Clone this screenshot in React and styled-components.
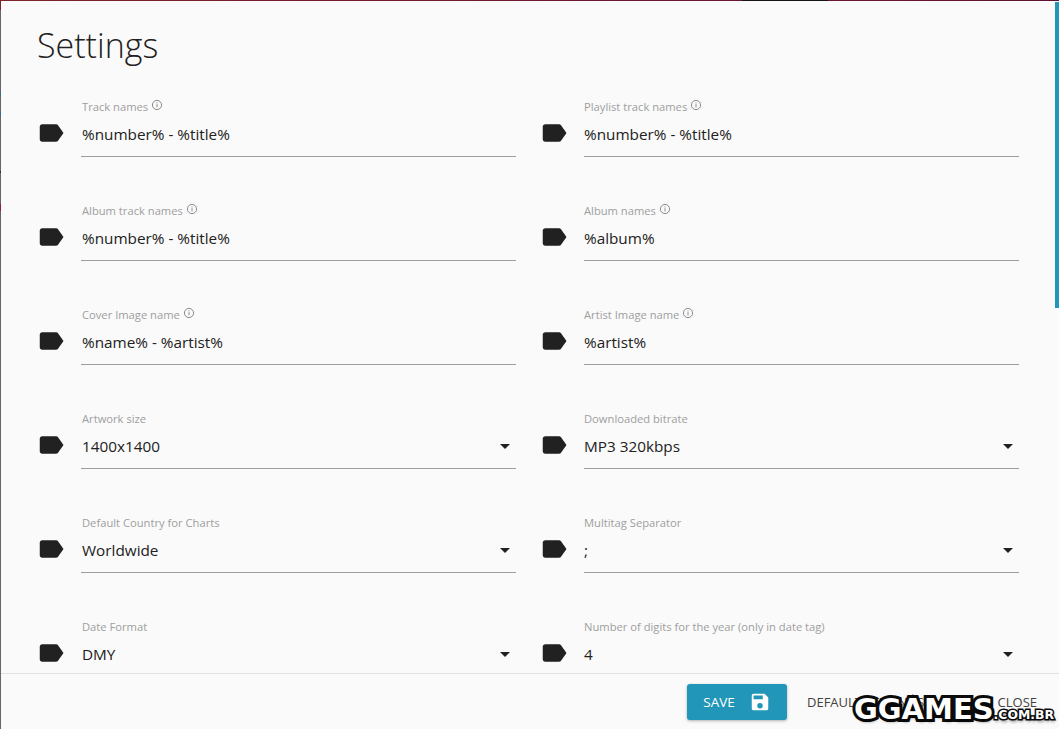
import React from 'react';
import styled, { createGlobalStyle } from 'styled-components';

const LEFT_FIELDS = [
  { label: 'Track names', value: '%number% - %title%', info: true },
  { label: 'Album track names', value: '%number% - %title%', info: true },
  { label: 'Cover Image name', value: '%name% - %artist%', info: true },
  { label: 'Artwork size', value: '1400x1400', select: true },
  { label: 'Default Country for Charts', value: 'Worldwide', select: true },
  { label: 'Date Format', value: 'DMY', select: true },
];

const RIGHT_FIELDS = [
  { label: 'Playlist track names', value: '%number% - %title%', info: true },
  { label: 'Album names', value: '%album%', info: true },
  { label: 'Artist Image name', value: '%artist%', info: true },
  { label: 'Downloaded bitrate', value: 'MP3 320kbps', select: true },
  { label: 'Multitag Separator', value: ';', select: true },
  { label: 'Number of digits for the year (only in date tag)', value: '4', select: true },
];

function LabelIcon() {
  return (
    <TagIcon viewBox="0 0 24 24">
      <path d="M17.63 5.84C17.27 5.33 16.67 5 16 5L5 5.01C3.9 5.01 3 5.9 3 7v10c0 1.1.9 1.99 2 1.99L16 19c.67 0 1.27-.33 1.63-.84L22 12l-4.37-6.16z" />
    </TagIcon>
  );
}

function InfoIcon() {
  return (
    <InfoGlyph viewBox="0 0 12 12">
      <circle cx="6" cy="6" r="4.6" fill="none" stroke="#8a8a8a" strokeWidth="1" />
      <path d="M6 5.2v3.2M6 3.4v1" stroke="#8a8a8a" strokeWidth="1" fill="none" />
    </InfoGlyph>
  );
}

function Field({ label, value, info, select, inset }) {
  return (
    <FieldRow>
      <LabelIcon />
      <FieldBody>
        <FieldLabel $inset={inset}>
          {label}
          {info && <InfoIcon />}
        </FieldLabel>
        <FieldValue $inset={inset}>
          <span>{value}</span>
          {select && <Caret />}
        </FieldValue>
      </FieldBody>
    </FieldRow>
  );
}

export default function App() {
  return (
    <>
      <GlobalStyle />
      <Page>
        <Dialog>
          <Content>
            <Title>Settings</Title>
            <Columns>
              <Column>
                {LEFT_FIELDS.map((f) => <Field key={f.label} inset={1} {...f} />)}
              </Column>
              <Column>
                {RIGHT_FIELDS.map((f) => <Field key={f.label} inset={0} {...f} />)}
              </Column>
            </Columns>
            <ScrollThumb />
          </Content>
          <Footer>
            <SaveButton>
              SAVE
              <svg width="22" height="22" viewBox="0 0 24 24" fill="#fff">
                <path d="M17 3H5a2 2 0 0 0-2 2v14a2 2 0 0 0 2 2h14a2 2 0 0 0 2-2V7l-4-4zm-5 16a3 3 0 1 1 0-6 3 3 0 0 1 0 6zm3-10H5V5h10v4z" />
              </svg>
            </SaveButton>
            <TextButton>DEFAULT SETTINGS</TextButton>
            <CloseButton>CLOSE</CloseButton>
          </Footer>
          <Watermark>
            GGAMES<small>.COM.BR</small>
          </Watermark>
        </Dialog>
      </Page>
    </>
  );
}

const GlobalStyle = createGlobalStyle`
  html, body {
    margin: 0;
    padding: 0;
    height: 100%;
    overflow: hidden;
  }
  body {
    font-family: "Open Sans", "Noto Sans", "Liberation Sans", sans-serif;
  }
`;

// the window behind the dialog only shows as a 1px sliver along the top and left
const Page = styled.div`
  height: 729px;
  padding: 1px 0 0 1px;
  box-sizing: border-box;
  display: flex;
  background:
    linear-gradient(90deg, #7f2229 0, #6d1533 742px, #151515 742px, #151515 828px, #6d1533 828px, #5e1231 100%) 0 0 / 100% 1px no-repeat,
    linear-gradient(180deg, #7f2229 0, #7f2229 10px, #666 10px, #666 92px, #2a6f8a 92px, #2a6f8a 95px, #666 95px, #666 112px, #2a6f8a 112px, #2a6f8a 115px, #666 115px, #666 171px, #333 171px, #333 173px, #666 173px, #666 204px, #8f1f3f 204px, #8f1f3f 211px, #666 211px) 0 0 / 1px 100% no-repeat;
`;

const Dialog = styled.div`
  position: relative;
  flex: 1;
  display: flex;
  flex-direction: column;
  background: #fafafa;
  min-width: 0;
`;

const Content = styled.div`
  position: relative;
  flex: 1;
  min-height: 0;
  overflow: hidden;
  padding: 0 0 0 35px;
`;

const Title = styled.h2`
  margin: 0;
  height: 88px;
  padding: 23px 0 0 1px;
  box-sizing: border-box;
  font-size: 34px;
  line-height: 42px;
  font-weight: 300;
  color: #212121;
`;

const Columns = styled.div`
  display: grid;
  grid-template-columns: 480px 480px;
  column-gap: 23px;
`;

const Column = styled.div`
  display: flex;
  flex-direction: column;
  gap: 26px;
`;

const FieldRow = styled.div`
  display: flex;
  align-items: flex-start;
  height: 78px;
  gap: 15px;
`;

const TagIcon = styled.svg`
  width: 30px;
  height: 30px;
  flex: none;
  fill: #212121;
  margin-top: 29px;
`;

const FieldBody = styled.div`
  flex: 1;
  min-width: 0;
  height: 62px;
  margin-top: 6px;
  display: flex;
  flex-direction: column;
  border-bottom: 1px solid #9e9e9e;
  box-sizing: border-box;
`;

const FieldLabel = styled.div`
  display: flex;
  align-items: center;
  gap: 3px;
  height: 20px;
  padding: 1px 0 0 ${(p) => p.$inset}px;
  font-size: 11.2px;
  color: #9e9e9e;
`;

const InfoGlyph = styled.svg`
  width: 12px;
  height: 12px;
  margin-top: -3px;
`;

const FieldValue = styled.div`
  display: flex;
  align-items: center;
  justify-content: space-between;
  height: 30px;
  padding: 3px 6px 0 ${(p) => p.$inset}px;
  font-size: 15.3px;
  color: #212121;
`;

const Caret = styled.i`
  width: 0;
  height: 0;
  border-left: 5.5px solid transparent;
  border-right: 5.5px solid transparent;
  border-top: 5px solid #212121;
`;

const ScrollThumb = styled.div`
  position: absolute;
  top: 1px;
  right: 0;
  width: 4px;
  height: 306px;
  background: #2196b8;
`;

const Footer = styled.div`
  height: 54px;
  flex: none;
  display: flex;
  align-items: center;
  padding: 1px 22px 0 686px;
  border-top: 1px solid #e0e0e0;
`;

const SaveButton = styled.button`
  width: 100px;
  height: 36px;
  flex: none;
  display: flex;
  align-items: center;
  justify-content: center;
  gap: 14px;
  margin-right: 20px;
  border: 0;
  border-radius: 3px;
  background: #2196b8;
  color: #fff;
  font: 400 13.5px "Open Sans", sans-serif;
  box-shadow: 0 1px 3px rgba(0, 0, 0, 0.3);
`;

const TextButton = styled.button`
  border: 0;
  padding: 0;
  background: none;
  color: #424242;
  font: 400 13px "Open Sans", sans-serif;
  white-space: nowrap;
`;

const CloseButton = styled(TextButton)`
  margin-left: auto;
`;

const Watermark = styled.div`
  position: absolute;
  left: 853px;
  bottom: 5px;
  font: 700 29px/1 "DejaVu Sans", sans-serif;
  color: #fff;
  -webkit-text-stroke: 6px #0c0c0c;
  paint-order: stroke fill;
  text-shadow: 1px 3px 3px rgba(0, 0, 0, 0.45);
  white-space: nowrap;

  small {
    font-size: 12.4px;
    -webkit-text-stroke: 3px #0c0c0c;
  }
`;
